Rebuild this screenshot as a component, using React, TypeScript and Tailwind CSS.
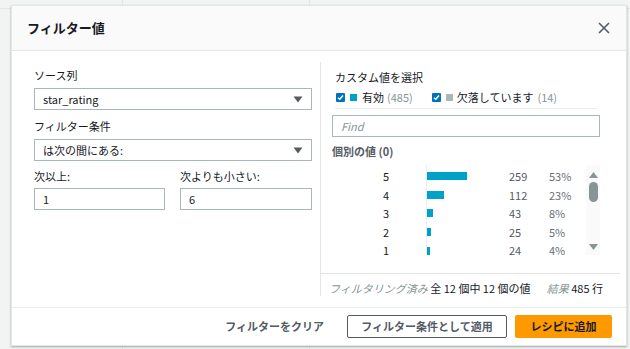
import React from "react";

const rows = [
  { v: "5", c: 259, p: "53%", w: 40 },
  { v: "4", c: 112, p: "23%", w: 17 },
  { v: "3", c: 43, p: "8%", w: 6 },
  { v: "2", c: 25, p: "5%", w: 4 },
  { v: "1", c: 24, p: "4%", w: 3 },
];

function Caret() {
  return (
    <svg width="10" height="7" viewBox="0 0 10 7" className="shrink-0">
      <path d="M0.5 0.5 H9.5 L5 6.5 Z" fill="#545b64" />
    </svg>
  );
}

function Check() {
  return (
    <span className="flex h-[9px] w-[9px] shrink-0 items-center justify-center rounded-[1px] bg-[#0073bb]">
      <svg width="7" height="7" viewBox="0 0 8 8">
        <path d="M1.2 4.2 L3.2 6 L6.8 1.8" stroke="#fff" strokeWidth="1.6" fill="none" />
      </svg>
    </span>
  );
}

export default function App() {
  return (
    <div
      className="relative h-[349px] w-[630px] overflow-hidden bg-[#f2f3f3]"
      style={{ fontFamily: '"Noto Sans CJK JP", "Noto Sans", sans-serif' }}
    >
      <div className="absolute left-[122px] top-0 h-full w-px bg-[#e4e6e6]" />
      <div className="absolute left-[309px] top-0 h-full w-px bg-[#e4e6e6]" />
      <div className="absolute left-0 top-[8px] h-px w-full bg-[#e4e6e6]" />
      <div className="absolute left-[11px] top-[5px] flex h-[341px] w-[616px] flex-col border border-[#e4e6e6] bg-white shadow-[0_1px_2px_rgba(0,28,36,0.35)]">
        {/* header */}
        <div className="flex h-[45px] shrink-0 items-center justify-between border-b border-[#e4e6e6] bg-[#fafafa] pl-[15px] pr-[16px]">
          <span className="text-[13px] font-bold leading-[20px] text-[#16191f]">フィルター値</span>
          <svg width="12" height="12" viewBox="0 0 12 12">
            <path d="M1 1 L11 11 M11 1 L1 11" stroke="#545b64" strokeWidth="1.6" />
          </svg>
        </div>
        {/* body */}
        <div className="flex flex-1">
          <div className="w-[308px] shrink-0 pl-[22px] pr-[8px] pt-[16px] text-[11px] text-[#16191f]">
            <div className="leading-[16px]">ソース列</div>
            <div className="mt-[5px] flex h-[22px] items-center justify-between border border-[#aab7b8] pl-[8px] pr-[8px]">
              <span>star_rating</span>
              <Caret />
            </div>
            <div className="mt-[8px] leading-[16px]">フィルター条件</div>
            <div className="mt-[5px] flex h-[22px] items-center justify-between border border-[#aab7b8] pl-[8px] pr-[8px]">
              <span>は次の間にある:</span>
              <Caret />
            </div>
            <div className="mt-[7px] flex gap-[15px]">
              <div className="w-[131px]">
                <div className="leading-[16px]">次以上:</div>
                <div className="mt-[4px] flex h-[22px] items-center border border-[#aab7b8] pl-[8px]">1</div>
              </div>
              <div className="flex-1">
                <div className="leading-[16px]">次よりも小さい:</div>
                <div className="mt-[4px] flex h-[22px] items-center border border-[#aab7b8] pl-[8px]">6</div>
              </div>
            </div>
          </div>
          <div className="mb-[11px] mt-[11px] flex flex-1 flex-col border-l border-[#e4e6e6] pr-[6px]">
            <div className="flex-1 pl-[11px] pr-[20px] text-[11px] text-[#16191f]">
              <div className="pl-[3px] pt-[7px] leading-[16px]">カスタム値を選択</div>
              <div className="mt-[4px] flex items-center pl-[4px] leading-[16px]">
                <Check />
                <span className="ml-[5px] h-[7px] w-[7px] bg-[#00a1c9]" />
                <span className="ml-[5px]">有効</span>
                <span className="ml-[3px] text-[#879596]">(485)</span>
                <span className="ml-[19px]"><Check /></span>
                <span className="ml-[5px] h-[7px] w-[7px] bg-[#aab7b8]" />
                <span className="ml-[4px]">欠落しています</span>
                <span className="ml-[4px] text-[#879596]">(14)</span>
              </div>
              <div className="ml-[3px] mr-[3px] mt-[3px] h-px bg-[#eaeded]" />
              <div className="mt-[6px] flex h-[22px] items-center border border-[#aab7b8] pl-[8px] text-[11px] italic text-[#879596]">
                Find
              </div>
              <div className="mt-[6px] font-bold leading-[16px] text-[#545b64]">個別の値 (0)</div>
              <div className="mt-[6px] flex">
                <div className="relative flex-1">
                  <div className="absolute left-[94px] top-0 h-[90px] w-px bg-[#eaeded]" />
                  <div className="flex flex-col pt-[2px]">
                    {rows.map((r) => (
                      <div key={r.v} className="flex h-[18.6px] items-center text-[11px]">
                        <span className="w-[95px] pl-[51px]">{r.v}</span>
                        <span className="w-[82px]">
                          <span className="block h-[8px] bg-[#00a1c9]" style={{ width: r.w }} />
                        </span>
                        <span className="w-[40px] text-[#545b64]">{r.c}</span>
                        <span className="text-[#687078]">{r.p}</span>
                      </div>
                    ))}
                  </div>
                </div>
                <div className="flex h-[90px] w-[14px] flex-col items-center bg-[#fafafa] pb-[5px] pt-[7px]">
                  <svg width="9" height="6" viewBox="0 0 9 6"><path d="M0 6 L4.5 0 L9 6 Z" fill="#879596" /></svg>
                  <div className="mt-[4px] h-[20px] w-[9px] rounded-full bg-[#879596]" />
                  <div className="flex-1" />
                  <svg width="9" height="6" viewBox="0 0 9 6"><path d="M0 0 L4.5 6 L9 0 Z" fill="#879596" /></svg>
                </div>
              </div>
            </div>
            <div className="flex justify-between border-t border-[#e4e6e6] pb-0 pl-[8px] pr-[17px] pt-[6px] text-[11px] leading-[16px]">
              <span>
                <span className="italic text-[#879596]">フィルタリング済み</span>
                <span className="text-[#16191f]"> 全 12 個中 12 個の値</span>
              </span>
              <span>
                <span className="italic text-[#879596]">結果</span>
                <span className="text-[#16191f]"> 485 行</span>
              </span>
            </div>
          </div>
        </div>
        {/* footer */}
        <div className="flex h-[38px] shrink-0 items-center justify-end gap-[8px] border-t border-[#eaeded] pr-[14px] text-[11px] font-bold text-[#545b64]">
          <span className="mr-[15px]">フィルターをクリア</span>
          <span className="flex h-[23px] w-[160px] items-center justify-center rounded-[2px] border border-[#545b64]">フィルター条件として適用</span>
          <span className="flex h-[23px] w-[97px] items-center justify-center rounded-[2px] bg-[#ff9900] text-[#16191f]">レシピに追加</span>
        </div>
      </div>
    </div>
  );
}
